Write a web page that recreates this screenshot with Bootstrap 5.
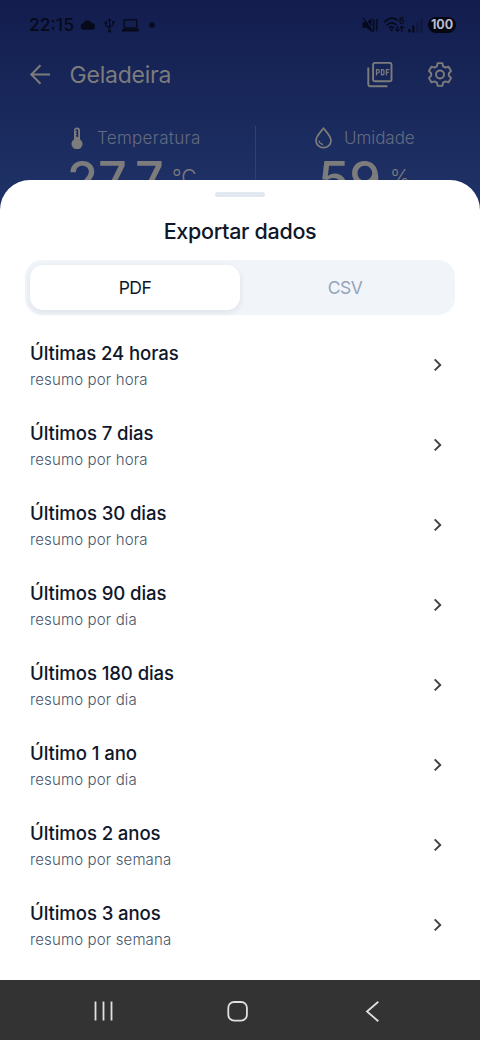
<!DOCTYPE html>
<html lang="pt-BR">
<head>
<meta charset="utf-8">
<meta name="viewport" content="width=device-width, initial-scale=1">
<title>Exportar dados</title>
<link href="https://cdn.jsdelivr.net/npm/bootstrap@5.3.0/dist/css/bootstrap.min.css" rel="stylesheet">
<style>
body{font-family:Inter,"Open Sans",sans-serif;width:480px;height:1040px;background:#fff;color:#0f172a;overflow:hidden}
svg{display:block;flex:none}
.hero{height:211px;background:linear-gradient(#131d4e,#1f3368);color:#7c7c7c;overflow:hidden}
.statusbar{height:50px;padding:0 24px 0 29px;color:#060a1b}
.clock{font-size:17.5px;font-weight:500;letter-spacing:0;width:51px;line-height:20px}
.battery{width:28px;height:16px;font-size:12.5px;font-weight:700;line-height:16px;background:#040712;color:#b9bccb}
.appbar{height:50px;padding:0 27px 0 28px}
.appbar h1{font-size:23px;font-weight:400;letter-spacing:-.22px;line-height:30px;margin-left:17.5px}
.metric-label{font-size:17px;font-weight:300;letter-spacing:.3px;line-height:24px;color:#646b7f}
.metric-value{font-size:50.5px;font-weight:500;line-height:60px}
.metric-unit{font-size:21px;font-weight:300}
.rule-v{width:1px;height:90px;background:#343f6b}
.sheet{height:800px;margin-top:-31px;border-radius:30px 30px 0 0;position:relative}
.grip{width:50px;height:5px;background:#e2e8f0;margin-top:12px}
.sheet h2{font-size:21.5px;font-weight:500;line-height:28px;margin-top:20px;letter-spacing:-.3px}
.switcher{width:430px;height:55px;background:#f1f5fa;border-radius:17px;margin-top:15px;padding:5px}
.switcher .btn{border:0;border-radius:13px;font-size:17.5px;letter-spacing:-.5px;padding:2px 0 0}
.switcher .on{background:#fff;color:#0f172a;box-shadow:0 2px 6px rgba(15,23,42,.09)}
.switcher .off{color:#94a3b8}
.ranges{padding:10px 30px 0}
.range-row{height:80px;padding:0 3px 0 0;border:0;background:none;color:#0f172a}
.range-name{font-size:18.6px;font-weight:500;line-height:26px;letter-spacing:-.1px;margin-bottom:2px;padding-top:2px}
.range-note{font-size:15px;font-weight:300;line-height:24px;letter-spacing:.14px;color:#475569}
.sysnav{height:60px;background:#333}
</style>
</head>
<body class="d-flex flex-column">
<header class="hero flex-shrink-0">
  <div class="statusbar d-flex align-items-center">
    <span class="clock">22:15</span>
    <svg width="16" height="10" viewBox="0 0 16 10" fill="#060a1b"><path d="M3.500 9.700a3.300 3.300 0 0 1-.3-6.500A4.700 4.700 0 0 1 11.800 3a3.400 3.400 0 0 1 .6 6.700z"/></svg>
    <svg class="ms-2" width="11" height="15" viewBox="0 0 11 15" fill="none" stroke="#060a1b" stroke-width="1.100"><path d="M5.500 2v11M5.500 10 1.700 7.500V5M5.500 9 9.300 7V4.500"/><path fill="#060a1b" stroke="none" d="m5.500 0 1.900 3H3.600zM.5 3.500h2.400v2.400H.5zM8.200 3h2.300v2.500H8.200z"/><circle cx="5.500" cy="13" r="1.600" fill="#060a1b" stroke="none"/></svg>
    <svg style="margin-left:7px" width="17" height="13" viewBox="0 0 17 13"><path d="M2.200 9V.8h12.600V9z" fill="none" stroke="#060a1b" stroke-width="1.300"/><path d="M0 10h17v2.500H0z" fill="#060a1b"/></svg>
    <svg style="margin-left:10px" width="6" height="6"><circle cx="3" cy="3" r="2.700" fill="#060a1b"/></svg>
    <svg class="ms-auto" width="17" height="16" viewBox="0 0 17 16" fill="#060a1b"><path d="M.5 5.200h4l5-4v13.600l-5-4h-4z"/><path d="m2.500.5 9.500 14" stroke="#152050" stroke-width="1.300"/><path d="m1.200 1 9.500 14" stroke="#060a1b" stroke-width="1.300"/><path d="m12.200 2-1 2 1 2-1 2 1 2-1 2 1 2M15.300 2l-1 2 1 2-1 2 1 2-1 2 1 2" stroke="#060a1b" stroke-width="1.300" fill="none"/></svg>
    <svg style="margin-left:4px" width="22" height="16" viewBox="0 0 22 16" fill="none" stroke="#060a1b" stroke-width="1.700"><path d="M1 5.500Q8.500-2 15 3.500M3.500 8.500Q8.500 3.500 13.500 8M6 11q2.500-2.500 5 0"/><circle cx="8.500" cy="13" r="1.300" fill="#060a1b" stroke="none"/><path d="M14.500 9v5m-2-2 2 2.300 2-2M18.800 15V9.500m-2 2 2-2.300 2 2" stroke-width="1.200"/><text x="16" y="6.800" font-size="8.500" font-weight="600" fill="#060a1b" stroke="none">6</text></svg>
    <svg style="margin-left:3px" width="15" height="15" viewBox="0 0 15 15"><path d="M.2 11h2.300v3.500H.2zM4.200 7.500h2.300v7H4.200z" fill="#060a1b"/><path d="M8.300 4h2.300v10.500H8.300zM12.300.5h2.300v14h-2.300z" fill="#0f183f"/></svg>
    <span class="battery rounded-pill text-center" style="margin-left:5px">100</span>
  </div>
  <div class="appbar d-flex align-items-center">
    <svg width="24" height="24" viewBox="0 0 24 24" fill="none" stroke="#7c7c7c" stroke-width="2"><path d="M22 11.500H3.500M12.500 2.300 3.300 11.500l9.200 9.200"/></svg>
    <h1 class="mb-0">Geladeira</h1>
    <svg class="ms-auto" width="26" height="26" viewBox="0 0 26 26" fill="none" stroke="#7c7c7c" stroke-width="1.900"><rect x="6.100" y=".9" width="18.400" height="18.400" rx="1.800"/><path d="M1.300 5.500v16.700a2 2 0 0 0 2 2H20.500"/><path d="M9.500 13.500V7.600h1.600q1.200 0 1.200 1.700T11.100 11H9.500M14.500 7.600v5.300h1q1.500 0 1.500-1.400V9q0-1.400-1.500-1.400zM19.400 13.500V7.600h3M19.400 10.400h2.300" stroke-width="1.200"/></svg>
    <svg style="margin-left:34px" width="26" height="26" viewBox="-13 -12.500 26 26" fill="none" stroke="#7c7c7c" stroke-width="1.900" stroke-linejoin="round"><path d="M-3.100-8.200-2.300-11.400H2.300L3.100-8.200 5.450-6.960 8.450-7.900 11.050-3.400 8.850-1.240V1.240L11.050 3.400 8.450 7.900 5.450 6.960 3.100 8.200 2.300 11.400H-2.300L-3.100 8.200-5.450 6.960-8.450 7.900-11.050 3.400-8.850 1.240V-1.240L-11.050-3.400-8.450-7.900-5.450-6.960z"/><circle r="4"/></svg>
  </div>
  <div class="d-flex" style="padding-top:26px">
    <section style="width:255px">
      <div class="d-flex align-items-center" style="padding-left:71px">
        <svg width="12" height="22" viewBox="0 0 12 22"><path d="M3 3.500a3 3 0 0 1 6 0v8.700a5.500 5.500 0 1 1-6 0z" fill="#7c7c7c"/><path d="M6.500 3v7M4.500 3.300H7M5 6h2M5 8.700h2" stroke="#1b2a5f" stroke-width="1.400"/></svg>
        <span class="metric-label" style="margin-left:14px">Temperatura</span>
      </div>
      <div class="d-flex" style="padding-left:67px"><span class="metric-value">27.7</span><span class="metric-unit" style="margin:12px 0 0 8px">°C</span></div>
    </section>
    <div class="rule-v"></div>
    <section>
      <div class="d-flex align-items-center" style="padding-left:59px">
        <svg width="17" height="22" viewBox="0 0 17 22" fill="none" stroke="#7c7c7c" stroke-width="1.700"><path d="M8.500 1.300C5 5.500 1 9.500 1 13.500a7.500 7.200 0 0 0 15 0C16 9.500 12 5.500 8.500 1.300z"/><path d="M4 13.500q.5 3.500 4.200 4" stroke-width="1.300"/></svg>
        <span class="metric-label" style="margin-left:12px;letter-spacing:-.05px">Umidade</span>
      </div>
      <div class="d-flex" style="padding-left:62px"><span class="metric-value">59</span><span class="metric-unit" style="margin:12px 0 0 9px">%</span></div>
    </section>
  </div>
</header>
<main class="sheet bg-white flex-shrink-0 overflow-hidden">
  <div class="grip rounded-pill mx-auto"></div>
  <h2 class="text-center mb-0">Exportar dados</h2>
  <div class="switcher d-flex mx-auto">
    <button class="btn on w-50">PDF</button><button class="btn off w-50">CSV</button>
  </div>
  <div class="ranges d-flex flex-column" id="ranges"></div>
</main>
<nav class="sysnav flex-shrink-0 d-flex align-items-center">
  <svg style="margin:2px 0 0 93px" width="21" height="20" viewBox="0 0 21 20" stroke="#e0e0e0" stroke-width="1.800"><path d="M2.500.5v19M10.500.5v19M18.500.5v19"/></svg>
  <svg style="margin:2px 0 0 113px" width="21" height="21" viewBox="0 0 21 21" fill="none" stroke="#e0e0e0" stroke-width="1.800"><rect x="1.300" y="1" width="18.600" height="18.600" rx="5.800"/></svg>
  <svg style="margin:2px 0 0 117px" width="15" height="21" viewBox="0 0 15 21" fill="none" stroke="#e0e0e0" stroke-width="1.800"><path d="M13.300.8 2 10.500l11.300 9.700"/></svg>
</nav>
<script src="https://cdn.jsdelivr.net/npm/bootstrap@5.3.0/dist/js/bootstrap.bundle.min.js"></script>
<script>
const ranges=[["Últimas 24 horas","hora"],["Últimos 7 dias","hora"],["Últimos 30 dias","hora"],["Últimos 90 dias","dia"],["Últimos 180 dias","dia"],["Último 1 ano","dia"],["Últimos 2 anos","semana"],["Últimos 3 anos","semana"]];
document.getElementById("ranges").innerHTML=ranges.map(([name,unit])=>`<button class="range-row d-flex align-items-center justify-content-between text-start w-100"><span><span class="range-name d-block">${name}</span><span class="range-note d-block">resumo por ${unit}</span></span><svg width="20" height="20" viewBox="0 0 20 20" fill="none" stroke="#424242" stroke-width="2"><path d="m7.700 4.400 5.500 5.500-5.500 5.500"/></svg></button>`).join("");
</script>
</body>
</html>
